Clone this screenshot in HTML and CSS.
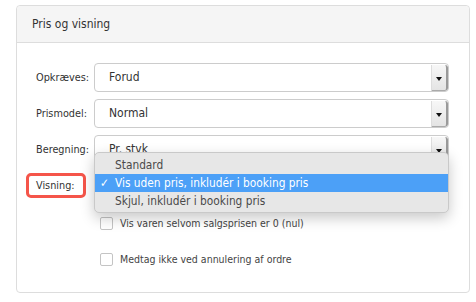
FILE: index.html
```html
<!DOCTYPE html>
<html lang="da">
<head>
    <meta charset="UTF-8">
    <meta name="viewport" content="width=device-width, initial-scale=1.0">
    <title>Pris og visning</title>
    <link rel="stylesheet" href="styles.css">
</head>
<body>
    <div class="panel">
        <div class="panel-heading">Pris og visning</div>

        <div class="panel-body">
            <div class="form-row">
                <label>Opkræves:</label>
                <div class="select">
                    <span class="value">Forud</span>
                    <span class="arrow"></span>
                </div>
            </div>

            <div class="form-row">
                <label>Prismodel:</label>
                <div class="select">
                    <span class="value">Normal</span>
                    <span class="arrow"></span>
                </div>
            </div>

            <div class="form-row">
                <label>Beregning:</label>
                <div class="select">
                    <span class="value">Pr. styk</span>
                    <span class="arrow"></span>
                </div>
            </div>

            <!-- the open list below covers this select -->
            <div class="form-row">
                <label><span class="marked">Visning:</span></label>
                <div class="select">
                    <span class="value"></span>
                    <span class="arrow"></span>
                </div>
            </div>

            <ul class="dropdown">
                <li>Standard</li>
                <li class="selected">Vis uden pris, inkludér i booking pris</li>
                <li>Skjul, inkludér i booking pris</li>
            </ul>

            <div class="check-row first">
                <span class="checkbox"></span>
                Vis varen selvom salgsprisen er 0 (nul)
            </div>

            <div class="check-row">
                <span class="checkbox"></span>
                Medtag ikke ved annulering af ordre
            </div>
        </div>
    </div>
</body>
</html>
```

FILE: styles.css
```css
body {
    margin: 0;
    font-family: "DejaVu Sans Condensed", "DejaVu Sans", sans-serif;
    font-size: 12px;
    color: #333;
    background: #fff;
}
.panel {
    margin: 5px 0 0 16px;
    width: 454px;
    height: 288px;
    box-sizing: border-box;
    border: 1px solid #ddd;
    border-radius: 4px;
}
.panel-heading {
    height: 36px;
    line-height: 36px;
    padding-left: 15px;
    background: #f5f5f5;
    border-bottom: 1px solid #ddd;
    border-radius: 4px 4px 0 0;
    font-size: 12px;
}
.panel-body {
    position: relative;
    padding: 20px 20px 0 19px;
}
.form-row {
    display: flex;
    align-items: center;
    height: 29px;
    margin-bottom: 7px;
}
.form-row label {
    width: 58px;
    flex-shrink: 0;
    font-size: 10.8px;
}
.marked {
    display: inline-block;
    height: 25px;
    line-height: 19px;
    box-sizing: border-box;
    margin-left: -10px;
    padding: 0 8px 0 7px;
    border: 3px solid #f5554a;
    border-radius: 5px;
}
.select {
    flex: 1;
    display: flex;
    height: 29px;
    box-sizing: border-box;
    border: 1px solid #ccc;
    border-radius: 4px;
    background: #fff;
    overflow: hidden;
}
.select .value {
    flex: 1;
    padding-left: 14px;
    line-height: 27px;
    font-size: 12px;
    white-space: nowrap;
}
.select .arrow {
    position: relative;
    width: 14px;
    margin: 1px 0 0;
    background: linear-gradient(#f7f7f7, #e4e4e4);
    border-left: 1px solid #ddd;
    border-right: 2px solid #9a9a9a;
    border-bottom: 1px solid #aaa;
    border-radius: 0 3px 3px 0;
}
.select .arrow::after {
    content: "";
    position: absolute;
    left: 4px;
    top: 12px;
    border-left: 3px solid transparent;
    border-right: 3px solid transparent;
    border-top: 4px solid #111;
}
.dropdown {
    position: absolute;
    left: 77px;
    top: 109px;
    width: 355px;
    height: 61px;
    box-sizing: border-box;
    margin: 0;
    padding: 3px 0 0;
    list-style: none;
    background: #e7e7e7;
    border: 1px solid #c9c9c9;
    border-radius: 5px;
    box-shadow: 0 5px 14px rgba(0, 0, 0, 0.22);
    font-size: 11.8px;
    color: #4a4a4a;
}
.dropdown li {
    height: 18px;
    line-height: 18px;
    padding-left: 20px;
    position: relative;
}
.dropdown li.selected {
    background: #4ca0f7;
    color: #fff;
}
.dropdown li.selected::before {
    content: "\2713";
    position: absolute;
    left: 5px;
    top: 0;
    font-weight: bold;
}
.check-row {
    display: flex;
    align-items: center;
    height: 18px;
    margin-left: 64px;
    margin-top: 18px;
    font-size: 10.5px;
    color: #444;
}
.check-row.first {
    margin-top: 14px;
}
.checkbox {
    width: 11px;
    height: 11px;
    margin-right: 7px;
    border: 1px solid #c4c4c4;
    border-radius: 2px;
    background: #fff;
}
```
